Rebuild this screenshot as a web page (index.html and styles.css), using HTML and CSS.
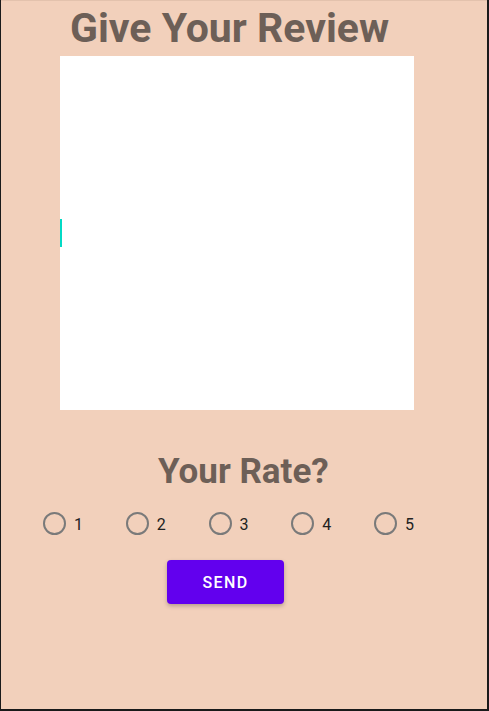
FILE: index.html
```html
<!DOCTYPE html>
<html>
<head>
<meta charset="utf-8">
<link rel="stylesheet" href="styles.css">
</head>
<body>
<div class="screen">
  <h1 class="title">Give Your Review</h1>
  <div class="review-box"><span class="cursor"></span></div>
  <h2 class="rate-title">Your Rate?</h2>
  <div class="radio-group">
    <label class="radio"><span class="circle"></span><span class="num">1</span></label>
    <label class="radio"><span class="circle"></span><span class="num">2</span></label>
    <label class="radio"><span class="circle"></span><span class="num">3</span></label>
    <label class="radio"><span class="circle"></span><span class="num">4</span></label>
    <label class="radio"><span class="circle"></span><span class="num">5</span></label>
  </div>
  <button class="send">SEND</button>
</div>
</body>
</html>
```
FILE: styles.css
```css
html, body {
  margin: 0;
  padding: 0;
  background: #1a1a1a;
}
.screen {
  margin: 0 2px 0 1px;
  height: 709px;
  background: #F2D0BB;
  display: flex;
  flex-direction: column;
  align-items: flex-start;
  font-family: Roboto, "Liberation Sans", sans-serif;
  border-top: 1px solid #e3c2ad;
  box-sizing: border-box;
}
.title {
  margin: 3px 0 0 69px;
  font-size: 41px;
  line-height: 48px;
  font-weight: 700;
  color: #6D5F57;
}
.review-box {
  position: relative;
  margin: 4px 0 0 59px;
  width: 354px;
  height: 354px;
  background: #ffffff;
}
.cursor {
  position: absolute;
  left: 0;
  top: 163px;
  width: 2px;
  height: 28px;
  background: #03DAC5;
}
.rate-title {
  margin: 41px 0 0 157px;
  font-size: 35px;
  line-height: 41px;
  font-weight: 700;
  color: #6D5F57;
}
.radio-group {
  margin: 20px 0 0 42px;
  display: flex;
}
.radio {
  width: 82.75px;
  display: flex;
  align-items: center;
  gap: 8px;
}
.circle {
  width: 23px;
  height: 23px;
  box-sizing: border-box;
  border: 2px solid #7a7a7a;
  border-radius: 50%;
}
.num {
  font-size: 16px;
  line-height: 19px;
  color: #222222;
  padding-top: 2px;
}
.send {
  margin: 25px 0 0 166px;
  width: 117px;
  height: 44px;
  border: none;
  border-radius: 4px;
  background: #6200EE;
  color: #ffffff;
  font-family: Roboto, "Liberation Sans", sans-serif;
  font-size: 16px;
  font-weight: 500;
  letter-spacing: 1.4px;
  box-shadow: 0 2px 4px rgba(0, 0, 0, 0.25);
  padding: 0;
}
```
